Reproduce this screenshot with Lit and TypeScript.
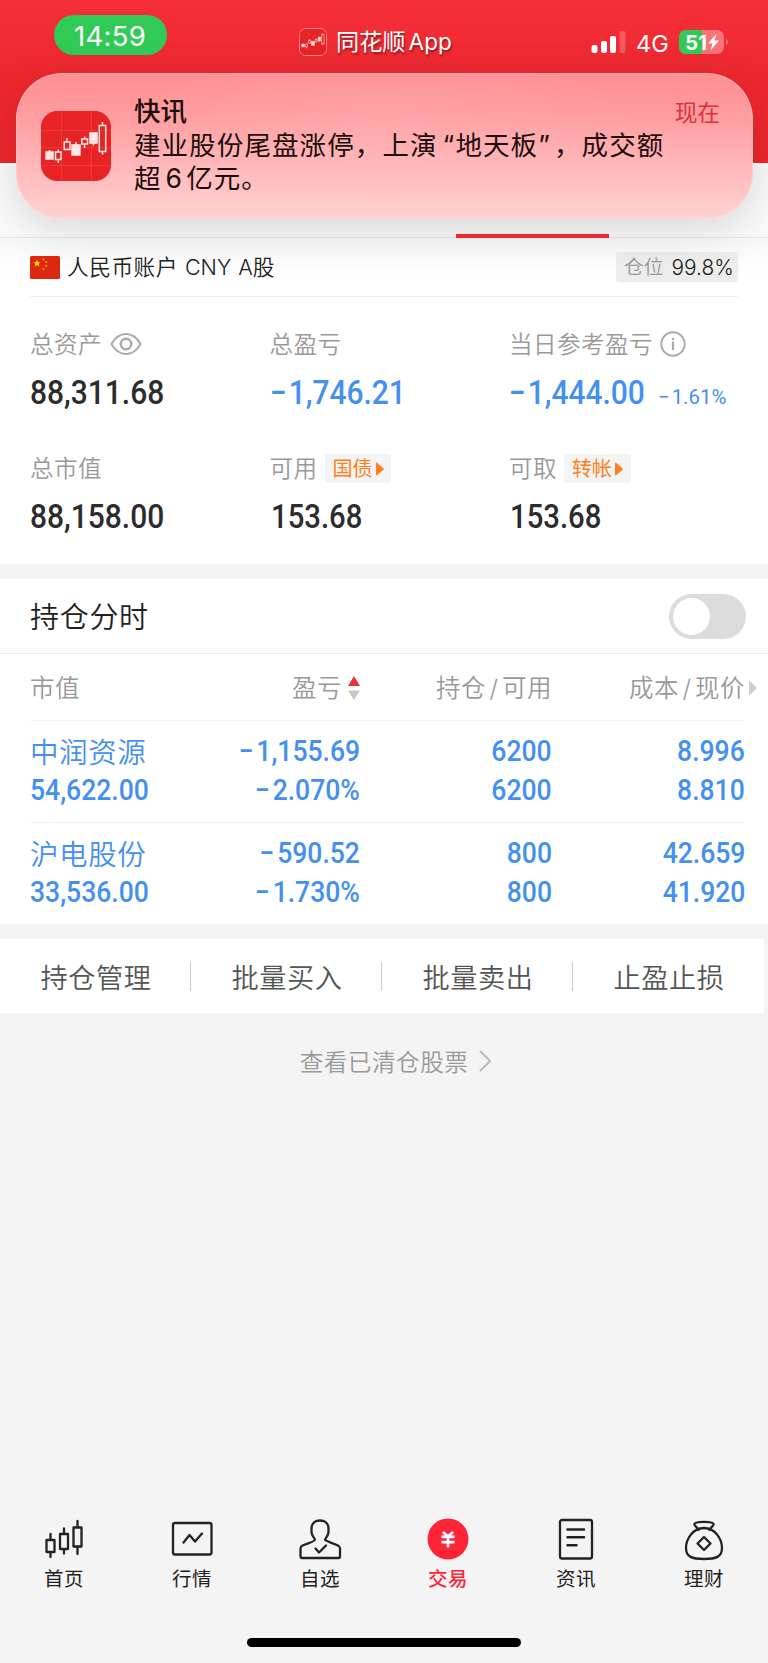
import { LitElement, html, css, svg } from "lit";
import { customElement, property } from "lit/decorators.js";

const candles = svg`
  <rect x="5" y="41" width="7" height="7" fill="#ffe9e6"/><path d="M8.500 39V42"/>
  <path d="M14.500 41H20V48.500H14.500ZM17.300 38.500V41M17.300 48.500V52"/>
  <path d="M23.200 31H29V38.500H23.200ZM26 27V31"/>
  <rect x="31" y="34" width="8" height="10" fill="#ffe9e6"/><path d="M35 31V35"/>
  <path d="M40.800 28H46.500V33H40.800ZM43.600 25.500V28M43.600 33V37"/>
  <rect x="49" y="22" width="7" height="10" fill="#ffe9e6"/><path d="M52.500 31V34.500"/>
  <path d="M58.300 14.500H64.700V40.500H58.300ZM61.500 11V14.500M61.500 40.500V43.500"/>`;

// Losses are set with a little air after the minus sign.
const figure = (t: string) => (t.startsWith("−") ? html`<span class="minus">−</span>${t.slice(1)}` : t);

@customElement("app-logo")
class AppLogo extends LitElement {
  static styles = css`
    :host { display: block; overflow: hidden; }
    svg { display: block; width: 100%; height: 100%; }
  `;
  render() {
    return html`<svg viewBox="0 0 70 70">
      <rect width="70" height="70" fill="#e82325" />
      <path d="M0 19.500H70M0 36.500H70M0 54.500H70M20.500 0V70M50.500 0V70" stroke="#fff" stroke-opacity=".1" fill="none" />
      <g fill="none" stroke="#ffe9e6" stroke-width="1.500">${candles}</g>
    </svg>`;
  }
}

@customElement("status-bar")
class StatusBar extends LitElement {
  static styles = css`
    :host { display: flex; position: relative; height: 70px; color: #fff; font-family: Inter, "Noto Sans CJK SC", sans-serif; }
    .time { box-sizing: border-box; margin: 15px 0 0 54px; width: 113px; height: 40px; border-radius: 20px; background: #31ca57; font-size: 27.5px; line-height: 42px; text-align: center; letter-spacing: 0.3px; padding-right: 1px; }
    .app { display: flex; align-items: center; margin: 28px 0 0 132px; height: 28px; gap: 9px; font-size: 23.2px; text-shadow: 1px 2px 2px rgba(0,0,0,.4); white-space: nowrap; width: 292px; }
    app-logo { width: 28px; height: 28px; border: 1px solid #ff8a8c; border-radius: 7px; box-sizing: border-box; }
    .app .name { line-height: 31px; }
    .latin { margin-left: 3px; font-size: 22.600px; }
    .signal { margin: 31px 0 0; width: 35px; height: 23px; }
    .net { margin: 30px 0 0 10px; width: 33px; font-size: 23.5px; line-height: 27px; }
    .battery { margin: 30px 0 0 10px; width: 50px; height: 24px; }
    .lvl { font: 700 20.500px Inter, sans-serif; fill: #fff; }
  `;
  render() {
    return html`
      <div class="time">14:59</div>
      <div class="app"><app-logo></app-logo><span class="name">同花顺<span class="latin">App</span></span></div>
      <svg class="signal" viewBox="0 0 35 23" fill="#fff">
        <rect x="0.500" y="14" width="6" height="8" rx="2" /><rect x="10" y="10" width="6" height="12" rx="2" />
        <rect x="19" y="5" width="6" height="17" rx="2" /><rect x="28.500" y="0" width="6" height="22" rx="2" opacity=".22" />
      </svg>
      <div class="net">4G</div>
      <svg class="battery" viewBox="0 0 50 24">
        <defs><clipPath id="shell"><rect width="45" height="24" rx="7" /></clipPath></defs>
        <g clip-path="url(#shell)"><rect width="45" height="24" fill="#f7757a" /><rect width="23" height="24" fill="#31ca57" /></g>
        <path d="M47 8.500Q49 10 49 12T47 15.500Z" fill="#f7757a" />
        <text class="lvl" x="6" y="19.500" textLength="22">51</text>
        <path d="M37.500 3.500L29 13.500H33.500L31.500 20.500L40 10.500H35.500Z" fill="#fff" />
      </svg>`;
  }
}

@customElement("news-banner")
class NewsBanner extends LitElement {
  static styles = css`
    :host { display: flex; box-sizing: border-box; height: 146px; padding: 22px 33px 0 25px; border-radius: 46px;
      background: radial-gradient(ellipse 250px 80px at 50% 38%, rgba(255,190,190,.25), rgba(255,190,190,0)), linear-gradient(#ff8f93, #ff9da0 30%, #ffb6b8 62%, #ffd2d3);
      box-shadow: 0 10px 44px rgba(0,0,0,.14), inset 0 0 1px 1px rgba(255,235,235,.35);
      font-family: Inter, "Noto Sans CJK SC", sans-serif; color: #1c0d0e; }
    app-logo { width: 70px; height: 70px; border-radius: 16px; margin-top: 16px; flex: none; }
    .copy { margin-left: 23px; flex: 1; white-space: nowrap; font-size: 26.5px; line-height: 33.700px; letter-spacing: 1.1px; }
    .title { font-weight: 500; letter-spacing: 0; }
    .quote { margin-left: 5px; }
    .close { margin-right: 3px; }
    .six { margin: 0 3px 0 4px; }
    .when { font-size: 22.700px; line-height: 36px; color: #e0303c; }
  `;
  render() {
    return html`<app-logo></app-logo>
      <div class="copy">
        <div class="title">快讯</div>
        <div>建业股份尾盘涨停，上演<span class="quote">“</span>地天板<span class="close">”</span>，成交额</div>
        <div>超<span class="six">6</span>亿元。</div>
      </div>
      <div class="when">现在</div>`;
  }
}

@customElement("account-summary")
class AccountSummary extends LitElement {
  static styles = css`
    :host { display: block; padding: 0 30px; height: 326px; background: linear-gradient(#f8f8f8, #fff 40px); font-family: Inter, "Noto Sans CJK SC", sans-serif; }
    .account { display: flex; align-items: center; height: 58px; border-bottom: 1px solid #eee; font-size: 21.700px; color: #222; }
    .flag { width: 30px; height: 23px; margin-right: 7px; }
    .cn { letter-spacing: 0.5px; }
    .acct { font-weight: 350; display: flex; line-height: 31px; }
    .cny { margin: 0 7px 0 7px; font-size: 21.500px; }
    .position { margin-left: auto; display: flex; box-sizing: border-box; width: 122px; height: 30px; padding-left: 8px; gap: 8px; border-radius: 3px; background: #ededed; font-size: 19.800px; line-height: 31px; color: #999; font-weight: 350; }
    .position b { font-weight: 350; color: #222; font-size: 20.800px; }
    .grid { display: grid; grid-template-columns: 239.500px 239.500px 1fr; padding-top: 32px; }
    .cell { height: 124px; white-space: nowrap; }
    .label { display: flex; align-items: center; height: 32px; font-size: 23.500px; letter-spacing: 0.5px; color: #999; font-weight: 350; line-height: 32px; }
    .eye { width: 32px; height: 24px; margin-left: 8px; margin-bottom: 3px; }
    .info { width: 26px; height: 26px; margin-left: 7px; margin-bottom: 2px; }
    .tag { display: flex; align-items: center; box-sizing: border-box; margin: -1px 0 0 7px; width: 66.500px; height: 29px; padding-left: 8px; gap: 3px; border-radius: 3px; background: #f4f4f4; color: #ff7f1e; font-size: 20px; letter-spacing: 0; font-weight: 400; }
    .tag svg { width: 8px; height: 14px; }
    .amount { margin-top: 12px; height: 38px; font: 500 33.300px/39px Roboto, sans-serif; color: #2c2c2c; }
    .blue { color: #4490f1; }
    .num { display: inline-block; transform: scaleX(.9); transform-origin: left; }
    .short { transform: scaleX(.88); margin-left: 1px; }
    .minus { margin-right: 2px; }
    .pct { display: inline-block; font-size: 20.400px; font-weight: 400; transform-origin: left; margin-left: -2px; }
  `;
  private tag(t: string) {
    return html`<span class="tag">${t}<svg viewBox="0 0 8 14"><path d="M0 1Q0 0 1 .8L7.500 6.200Q8.200 7 7.500 7.800L1 13.200Q0 14 0 13Z" fill="#ff7f1e" /></svg></span>`;
  }
  render() {
    return html`
      <div class="account">
        <svg class="flag" viewBox="0 0 30 23"><rect width="30" height="23" rx="1.500" fill="#de2910" />
          <path d="M7 3.500L8 6.200H10.800L8.600 7.800L9.400 10.500L7 8.900L4.600 10.500L5.400 7.800L3.200 6.200H6Z" fill="#ffde00" />
          <g fill="#e8a010"><circle cx="13.500" cy="3.500" r="1.100" /><circle cx="16.200" cy="6" r="1.100" /><circle cx="16.200" cy="10" r="1.100" /><circle cx="13.500" cy="13" r="1.100" /></g></svg>
        <div class="acct"><span class="cn">人民币账户</span><span class="cny">CNY</span><span>A股</span></div>
        <div class="position">仓位 <b>99.8%</b></div>
      </div>
      <div class="grid">
        <div class="cell"><div class="label">总资产
          <svg class="eye" viewBox="0 0 32 24" fill="none" stroke="#aaa" stroke-width="1.900"><path d="M1.500 12Q7 2 16 2T30.500 12Q25 22 16 22T1.500 12Z" /><circle cx="16" cy="12" r="5.300" stroke-width="2.400"/></svg></div>
          <div class="amount"><span class="num">88,311.68</span></div></div>
        <div class="cell"><div class="label">总盈亏</div><div class="amount blue"><span class="num">${figure("−1,746.21")}</span></div></div>
        <div class="cell"><div class="label">当日参考盈亏
          <svg class="info" viewBox="0 0 26 26" fill="none" stroke="#aaa" stroke-width="1.900"><circle cx="13" cy="13" r="11.700" /><path d="M13 10.500V19M13 7V9" stroke-width="2.200"/></svg></div>
          <div class="amount blue"><span class="num">${figure("−1,444.00")}</span><span class="pct">${figure("−1.61%")}</span></div></div>
        <div class="cell"><div class="label">总市值</div><div class="amount"><span class="num">88,158.00</span></div></div>
        <div class="cell"><div class="label">可用${this.tag("国债")}</div><div class="amount"><span class="num short">153.68</span></div></div>
        <div class="cell"><div class="label">可取${this.tag("转帐")}</div><div class="amount"><span class="num short">153.68</span></div></div>
      </div>`;
  }
}

const holdings = [
  [["中润资源", "54,622.00"], ["−1,155.69", "−2.070%"], ["6200", "6200"], ["8.996", "8.810"]],
  [["沪电股份", "33,536.00"], ["−590.52", "−1.730%"], ["800", "800"], ["42.659", "41.920"]],
];

@customElement("holding-list")
class HoldingList extends LitElement {
  static styles = css`
    :host { display: block; height: 345px; background: #fff; font-family: Inter, "Noto Sans CJK SC", sans-serif; }
    .head { display: flex; align-items: center; justify-content: space-between; height: 74px; padding: 0 22px 0 30px; border-bottom: 1px solid #eee; font-size: 29px; letter-spacing: 0.7px; line-height: 42px; color: #222; font-weight: 350; }
    .title { padding-top: 3px; }
    .switch { box-sizing: border-box; width: 77px; height: 45px; border-radius: 23px; background: #dcdcdc; padding: 4px; }
    .knob { width: 37px; height: 37px; border-radius: 50%; background: #fff; }
    .row { display: grid; grid-template-columns: 170px 160px 192px 193px; margin-left: 30px; width: 715px; border-bottom: 1px solid #f4f4f4; white-space: nowrap; }
    .cols { height: 66px; align-items: center; font-size: 24.500px; line-height: 38px; letter-spacing: 0.5px; color: #999; font-weight: 350; }
    .h { padding-top: 1px; }
    .row > div:not(:first-child) { display: flex; flex-direction: column; align-items: flex-end; }
    .cols > div.h:not(:first-child) { flex-direction: row; align-items: center; justify-content: flex-end; }
    .sort { width: 12px; height: 24px; margin-left: 6px; }
    .more { width: 8px; height: 16px; margin: 0 -12px 0 4px; }
    .slash { margin: 0 3.500px; }
    .stock { height: 92px; padding-top: 9px; color: #4490f1; }
    .line { height: 39px; font: 500 29.300px/43px Roboto, sans-serif; transform: scaleX(.905); transform-origin: right; }
    .minus { margin-right: 3px; }
    .row > div:first-child .line { transform-origin: left; }
    .name { height: 39px; font-size: 28.500px; letter-spacing: 0.6px; line-height: 45px; font-weight: 350; }
  `;
  render() {
    return html`
      <div class="head"><span class="title">持仓分时</span><div class="switch"><div class="knob"></div></div></div>
      <div class="row cols">
        <div class="h">市值</div>
        <div class="h">盈亏<svg class="sort" viewBox="0 0 12 24"><path d="M6 0L12 10H0Z" fill="#ee3131" /><path d="M0 14.500H12L6 24Z" fill="#c8c8c8" /></svg></div>
        <div class="h">持仓<span class="slash">/</span>可用</div>
        <div class="h">成本<span class="slash">/</span>现价<svg class="more" viewBox="0 0 8 16"><path d="M0 0.500L8 8L0 15.500Z" fill="#ccc" /></svg></div>
      </div>
      ${holdings.map((r) => html`<div class="row stock">${r.map((c, i) => html`<div>
        <div class=${i ? "line" : "name"}>${figure(c[0])}</div><div class="line">${figure(c[1])}</div></div>`)}</div>`)}`;
  }
}

@customElement("batch-actions")
class BatchActions extends LitElement {
  static styles = css`
    :host { display: flex; width: 764px; height: 74px; background: #fff; font-family: Inter, "Noto Sans CJK SC", sans-serif; }
    .item { flex: 1; display: flex; align-items: center; justify-content: center; font-size: 27.200px; letter-spacing: 0.5px; padding-left: 1px; color: #555; font-weight: 350; }
    .sep { width: 1px; height: 29px; background: #ccc; align-self: center; margin: 1px 0 0 -1px; }
  `;
  render() {
    return html`${["持仓管理", "批量买入", "批量卖出", "止盈止损"].map(
      (t, i) => html`${i ? html`<span class="sep"></span>` : ""}<div class="item">${t}</div>`
    )}`;
  }
}

const icons = [
  svg`<path d="M3.500 21H11.500V33H3.500ZM7.500 15V21M7.500 33V38M17 15H25V30H17ZM21 9.500V15M21 30V34.500M30.500 8.500H38.500V27.500H30.500ZM34.500 2V8.500M34.500 27.500V35"/>`,
  svg`<rect x="2" y="4" width="38.500" height="31.500" rx="2"/><path d="M12.500 23.500L18.500 16L24 22.500L31 14.500"/>`,
  svg`<path d="M16 21C16 19 12.500 17.500 12.500 13V9.500C12.500 4.500 16 1.500 21 1.500S29.500 4.500 29.500 9.500V13C29.500 17.500 26 19 26 21Q26 21.500 39 26.500Q41 27.500 41 29.500V37.500Q41 39 39.500 39H3Q1.500 39 1.500 37.500V29.500Q1.500 27.500 3.500 26.500Q16 22 16 21Z"/><path d="M16.500 29.500L20 33.500L27 26.500"/>`,
  svg`<circle cx="21" cy="20" r="20.500" fill="#ff2437" stroke="none"/><path d="M16 13L21 17.500L26 13M14.500 17.800H27.500M14.500 23.200H27.500M21 18V28.500" stroke="#fff" stroke-width="2.700" stroke-linecap="butt"/>`,
  svg`<rect x="5" y="1" width="32" height="38.500" rx="2"/><path d="M12.500 10.500H29M12.500 18.300H29M12.500 26.200H21.500" stroke-width="2.500"/>`,
  svg`<path d="M15.500 11C14.500 8 10.500 6.500 11.500 4.800C12.500 3 17 2.800 21 2.800S29.500 3 30.500 4.800C31.500 6.500 27.500 8 26.500 11"/><path d="M21 9C10 9 3 20 3 29C3 38 9 40 21 40S39 38 39 29C39 20 32 9 21 9Z"/><path d="M21 18L27.500 24.500L21 31L14.500 24.500Z"/>`,
];

@customElement("bottom-tabs")
class BottomTabs extends LitElement {
  @property({ type: Number }) active = 3;
  static styles = css`
    :host { display: grid; grid-template-columns: repeat(6, 1fr); font-family: Inter, "Noto Sans CJK SC", sans-serif; }
    .tab { display: flex; flex-direction: column; align-items: center; font-size: 19.500px; line-height: 28px; letter-spacing: 0.4px; color: #222; }
    .on { color: #ff2437; font-weight: 500; }
    svg { width: 42px; height: 42px; overflow: visible; margin-bottom: 4px; }
  `;
  render() {
    return html`${["首页", "行情", "自选", "交易", "资讯", "理财"].map(
      (t, i) => html`<div class="tab ${i === this.active ? "on" : ""}">
        <svg viewBox="0 0 42 42" fill="none" stroke="#222" stroke-width="2.300" stroke-linejoin="round" stroke-linecap="round">${icons[i]}</svg>${t}</div>`
    )}`;
  }
}

@customElement("app-root")
class AppRoot extends LitElement {
  static styles = css`
    :host { display: flex; flex-direction: column; position: relative; width: 768px; height: 1663px; overflow: hidden; background: #f4f4f4; font-family: Inter, "Noto Sans CJK SC", sans-serif; }
    .hero { height: 163px; background: linear-gradient(#f42f39, #ee282f 75px, #ee262c); flex: none; }
    .tabs { box-sizing: border-box; height: 75px; background: #fafafa; border-bottom: 1px solid #e6e6e6; flex: none; display: flex; align-items: flex-end; padding-left: 456px; }
    .mark { width: 153px; height: 4px; background: #ec282d; margin-bottom: -1px; z-index: 2; }
    news-banner { position: absolute; left: 16px; top: 73px; width: 737px; }
    account-summary, holding-list, batch-actions { flex: none; }
    holding-list { margin: 15px 0; }
    .cleared { display: flex; align-items: center; justify-content: center; height: 34px; margin: 31px 0 0 23px; font-size: 23.700px; letter-spacing: 0.4px; color: #999; font-weight: 350; }
    .cleared svg { width: 12px; height: 22px; margin-left: 11px; }
    bottom-tabs { margin-top: auto; }
    .home { width: 274px; height: 9px; border-radius: 5px; background: #000; margin: 45px auto 16px; flex: none; }
  `;
  render() {
    return html`
      <div class="hero"><status-bar></status-bar></div>
      <div class="tabs"><span class="mark"></span></div>
      <account-summary></account-summary>
      <holding-list></holding-list>
      <batch-actions></batch-actions>
      <div class="cleared">查看已清仓股票<svg viewBox="0 0 12 22" fill="none" stroke="#bbb" stroke-width="2"><path d="M1 1L11 11L1 21" /></svg></div>
      <bottom-tabs></bottom-tabs>
      <div class="home"></div>
      <news-banner></news-banner>`;
  }
}
